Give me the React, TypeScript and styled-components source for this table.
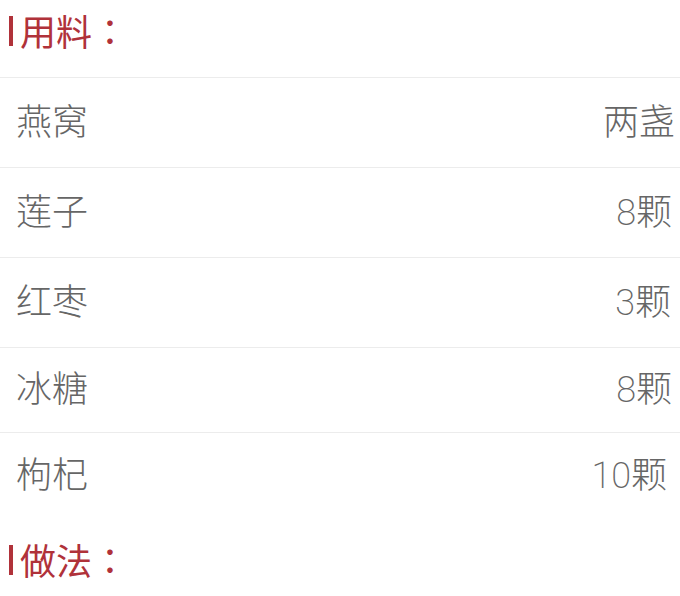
import styled, { createGlobalStyle } from "styled-components";

const GlobalStyle = createGlobalStyle`
  body {
    margin: 0;
    background: #ffffff;
    font-family: "Noto Sans CJK SC", "Noto Sans", sans-serif;
  }
`;

const ingredients = [
  { name: "燕窝", amount: "两盏", height: 90, pad: 5 },
  { name: "莲子", amount: "8颗", height: 90, pad: 8 },
  { name: "红枣", amount: "3颗", height: 90, pad: 9 },
  { name: "冰糖", amount: "8颗", height: 85, pad: 8 },
  { name: "枸杞", amount: "10颗", height: 86, pad: 13 },
];

function App() {
  return (
    <Page>
      <GlobalStyle />
      <SectionTitle $top={10} $bottom={20}>用料：</SectionTitle>
      <List>
        {ingredients.map((item) => (
          <Row key={item.name} $height={item.height}>
            <Name>{item.name}</Name>
            <Amount $pad={item.pad}>{item.amount}</Amount>
          </Row>
        ))}
      </List>
      <SectionTitle $top={21} $bottom={10}>做法：</SectionTitle>
    </Page>
  );
}

export default App;

const Page = styled.div`
  width: 680px;
  height: 596px;
  overflow: hidden;
  display: flex;
  flex-direction: column;
`;

const SectionTitle = styled.h2<{ $top: number; $bottom: number }>`
  position: relative;
  margin: 0;
  padding: ${(p) => p.$top}px 0 0 20px;
  margin-bottom: ${(p) => p.$bottom}px;
  height: 48px;
  line-height: 40px;
  font-family: "Noto Sans CJK TC", "Noto Sans CJK SC", sans-serif;
  font-size: 36px;
  font-weight: 400;
  color: #b0323a;

  &::before {
    content: "";
    position: absolute;
    left: 9px;
    top: ${(p) => p.$top + 6}px;
    width: 4px;
    height: 30px;
    background: #b0323a;
  }
`;

const List = styled.div`
  display: flex;
  flex-direction: column;
`;

const Row = styled.div<{ $height: number }>`
  display: flex;
  align-items: center;
  justify-content: space-between;
  height: ${(p) => p.$height}px;
  box-sizing: border-box;
  border-top: 1px solid #ececec;
  padding: 0 0 8px 16px;
`;

const Name = styled.span`
  font-family: "Roboto", "Noto Sans CJK SC", sans-serif;
  font-size: 36px;
  font-weight: 200;
  color: #666666;
`;

const Amount = styled.span<{ $pad: number }>`
  font-family: "Roboto", "Noto Sans CJK SC", sans-serif;
  font-size: 36px;
  font-weight: 200;
  color: #666666;
  padding-right: ${(p) => p.$pad}px;
`;
